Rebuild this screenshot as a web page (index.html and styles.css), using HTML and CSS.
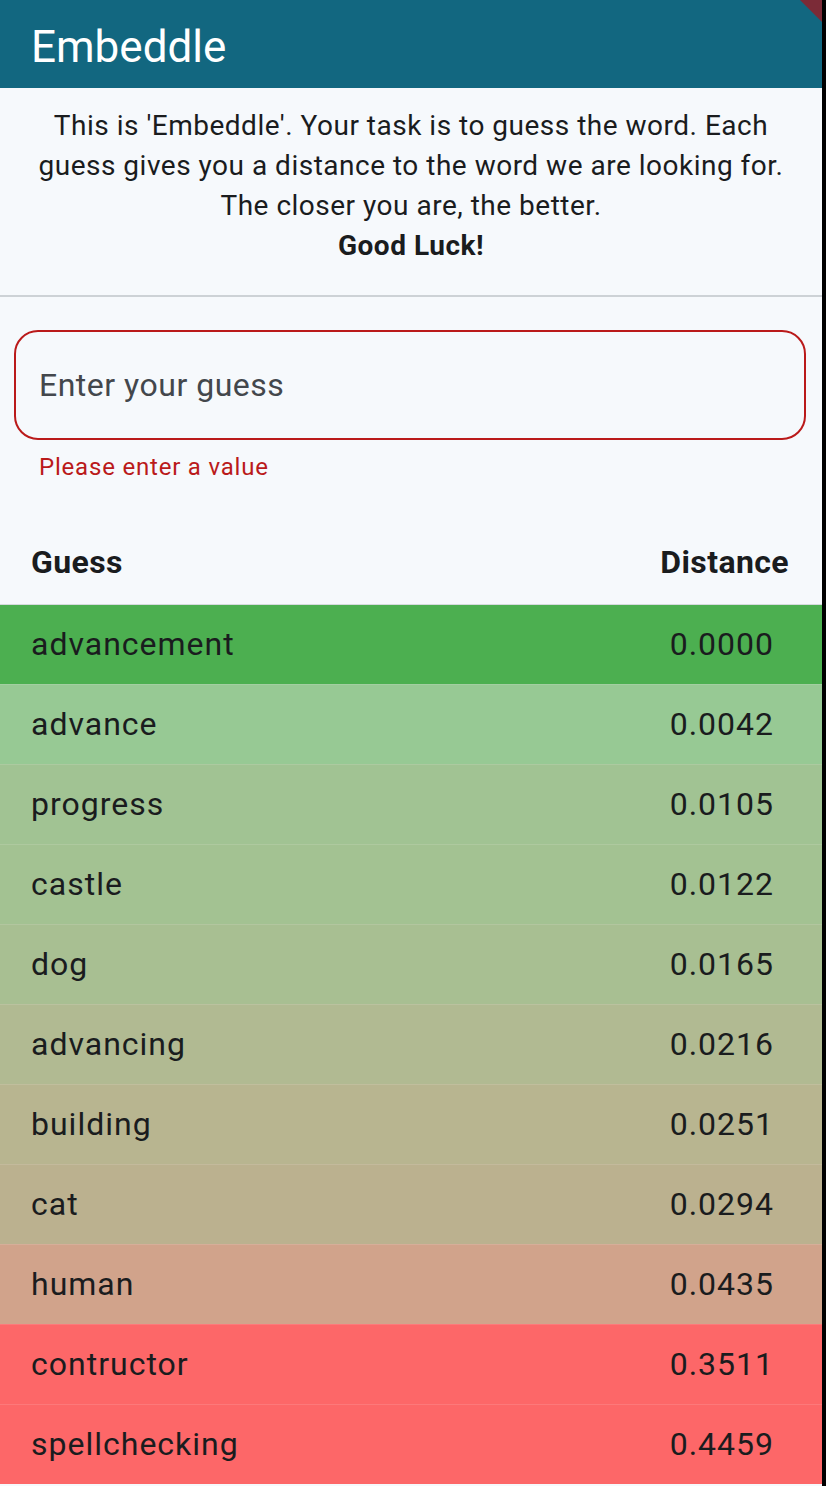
FILE: index.html
```html
<!DOCTYPE html>
<html>
<head>
<meta charset="utf-8">
<title>Embeddle</title>
<link rel="stylesheet" href="styles.css">
</head>
<body>
<div class="screen">
  <main class="app">
    <header class="appbar">
      <h1 class="title">Embeddle</h1>
    </header>
    <section class="intro">
      <p>This is 'Embeddle'. Your task is to guess the word. Each guess gives you a distance to the word we are looking for. The closer you are, the better.</p>
      <p class="luck">Good Luck!</p>
    </section>
    <hr class="divider">
    <form class="guess-form">
      <div class="field">
        <input class="field-input" type="text" placeholder="Enter your guess">
      </div>
      <div class="error">Please enter a value</div>
    </form>
    <table class="guesses">
      <thead>
        <tr><th class="col-word">Guess</th><th class="col-dist">Distance</th></tr>
      </thead>
      <tbody>
        <tr style="background:#4caf50"><td class="col-word">advancement</td><td class="col-dist">0.0000</td></tr>
        <tr style="background:#97c994"><td class="col-word">advance</td><td class="col-dist">0.0042</td></tr>
        <tr style="background:#a1c393"><td class="col-word">progress</td><td class="col-dist">0.0105</td></tr>
        <tr style="background:#a3c292"><td class="col-word">castle</td><td class="col-dist">0.0122</td></tr>
        <tr style="background:#a8bf92"><td class="col-word">dog</td><td class="col-dist">0.0165</td></tr>
        <tr style="background:#b1ba92"><td class="col-word">advancing</td><td class="col-dist">0.0216</td></tr>
        <tr style="background:#b8b590"><td class="col-word">building</td><td class="col-dist">0.0251</td></tr>
        <tr style="background:#bbb18f"><td class="col-word">cat</td><td class="col-dist">0.0294</td></tr>
        <tr style="background:#d1a38b"><td class="col-word">human</td><td class="col-dist">0.0435</td></tr>
        <tr style="background:#fd6768"><td class="col-word">contructor</td><td class="col-dist">0.3511</td></tr>
        <tr style="background:#fd6768"><td class="col-word">spellchecking</td><td class="col-dist">0.4459</td></tr>
      </tbody>
    </table>
  </main>
  <div class="edge"></div>
  <svg class="debug-banner" width="22" height="22" viewBox="0 0 22 22"><polygon points="0,0 22,0 22,22" fill="#7b2b37"/></svg>
</div>
</body>
</html>
```

FILE: styles.css
```css
* { box-sizing: border-box; }
html, body { margin: 0; padding: 0; }
body {
  background: #f6f9fc;
  font-family: Roboto, "Noto Sans", sans-serif;
  color: #1a1c1e;
}
.screen {
  position: relative;
  display: flex;
  width: 826px;
  min-height: 1486px;
}
.app {
  width: 822px;
  background: #f6f9fc;
  display: flex;
  flex-direction: column;
}
.edge {
  width: 4px;
  background: #000;
}
.appbar {
  height: 88px;
  background: #126780;
  display: flex;
  align-items: center;
  padding: 6px 0 0 31px;
}
.title {
  margin: 0;
  font-weight: 400;
  font-size: 44px;
  color: #fff;
  line-height: 1;
}
.intro {
  padding: 18px 32px 14px;
  text-align: center;
  font-size: 28px;
  line-height: 40px;
  letter-spacing: 0.5px;
}
.intro p { margin: 0; }
.luck { font-weight: 700; letter-spacing: 0.5px; }
.divider {
  margin: 15px 0 15px;
  border: 0;
  height: 2px;
  background: #cdd2d6;
}
.guess-form {
  padding: 18px 16px 0 14px;
}
.field {
  height: 110px;
  border: 2px solid #ba1a1a;
  border-radius: 24px;
  display: flex;
  align-items: center;
  padding-left: 21px;
}
.field-input {
  border: 0;
  outline: 0;
  background: transparent;
  width: 100%;
  font-family: Roboto, sans-serif;
  font-size: 32px;
  letter-spacing: 0.5px;
  color: #1a1c1e;
}
.field-input::placeholder { color: #43474c; opacity: 1; }
.error {
  margin-top: 13px;
  padding-left: 25px;
  font-size: 24px;
  line-height: 28px;
  color: #ba1a1a;
  letter-spacing: 0.8px;
}
.guesses {
  margin-top: 39px;
  width: 100%;
  border-collapse: collapse;
}
.guesses th {
  height: 84px;
  font-size: 32px;
  font-weight: 700;
  letter-spacing: 0.4px;
  text-align: left;
  padding: 0 0 0 31px;
  border-bottom: 1px solid #d5dadd;
}
.guesses th.col-dist { text-align: right; padding: 0 33px 0 0; }
.guesses td {
  height: 80px;
  font-size: 32px;
  letter-spacing: 1px;
  padding: 0 0 0 31px;
  border-top: 1px solid rgba(255,255,255,0.12);
}
.guesses td.col-dist { text-align: right; padding: 0 48px 0 0; }
.debug-banner {
  position: absolute;
  top: 0;
  left: 800px;
}
```
